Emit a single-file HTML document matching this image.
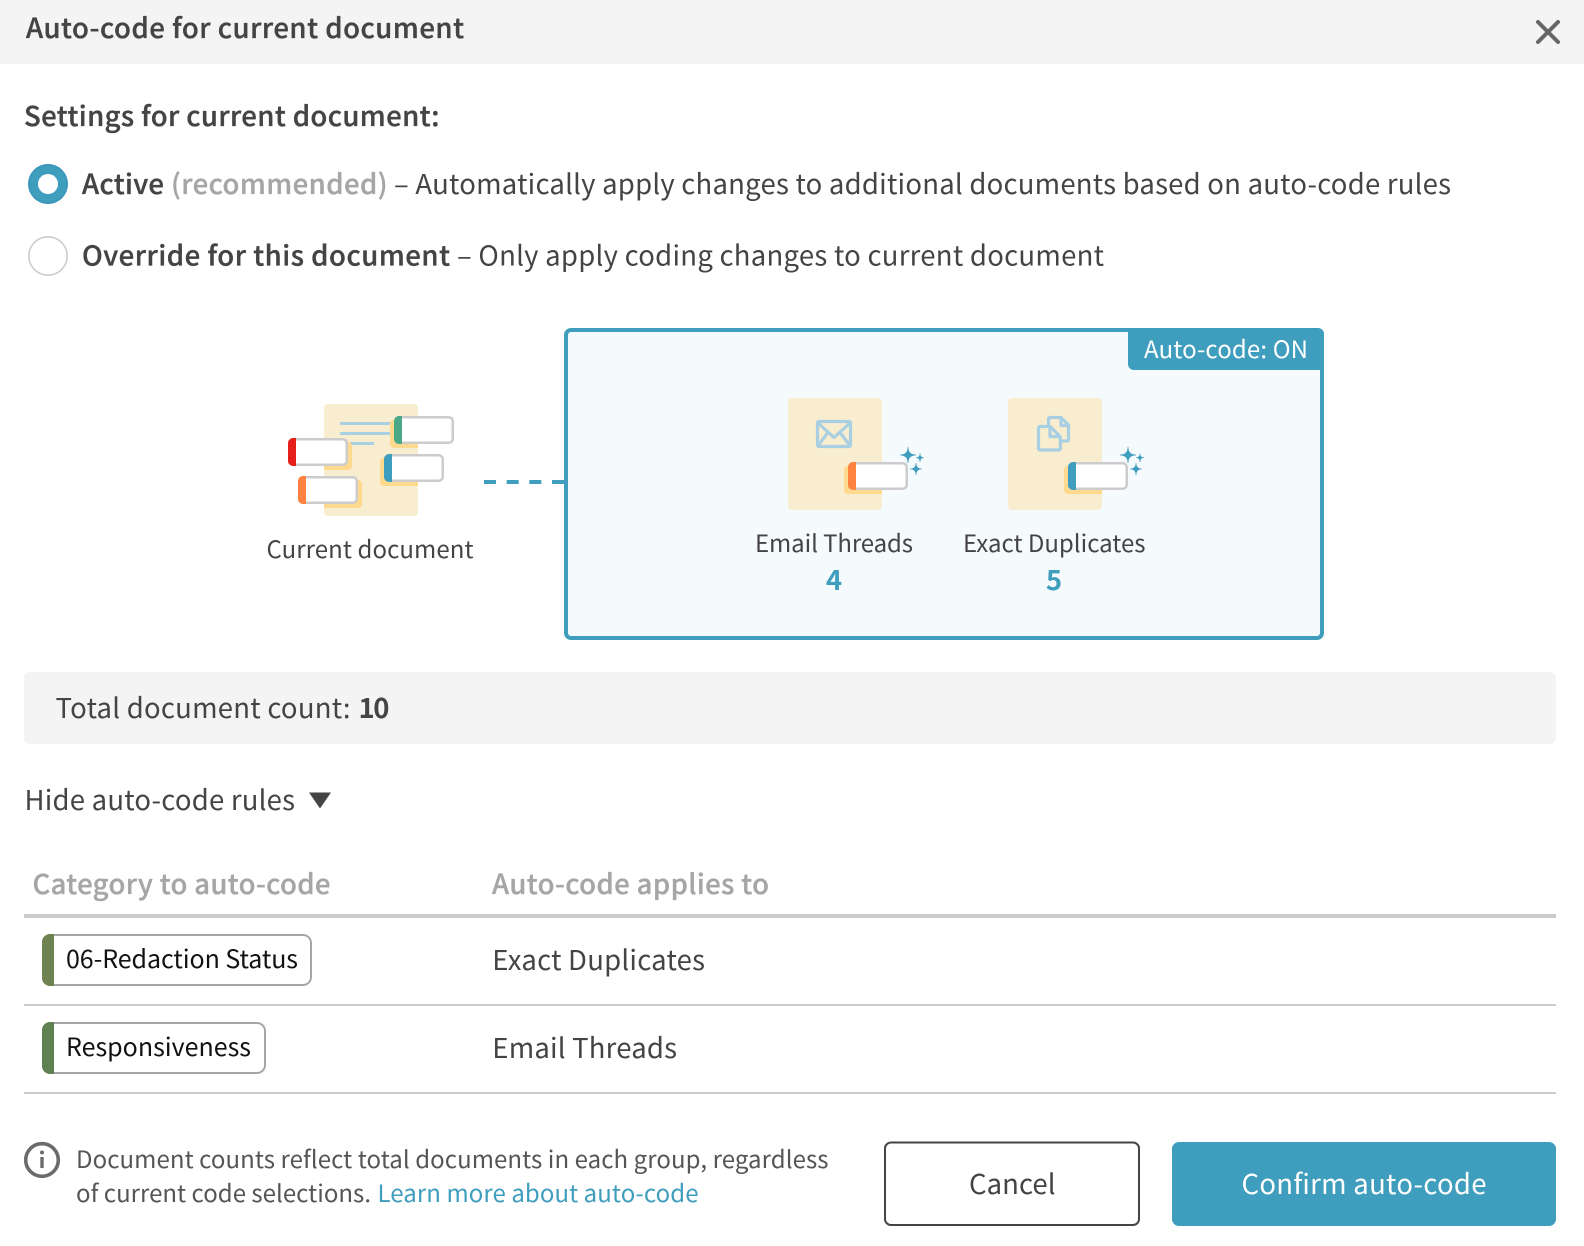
<!DOCTYPE html>
<html lang="en">
<head>
<meta charset="utf-8">
<title>Auto-code for current document</title>
<style>
html,body{margin:0;padding:0;background:#fff;width:1584px;height:1246px;overflow:hidden}
svg{display:block}
text{font-family:"Noto Sans CJK JP","Liberation Sans",sans-serif;fill:#444;font-size:27.5px;font-weight:400}
.s{font-weight:500;stroke:#444;stroke-width:.35px}
.b{font-weight:700}
.sm{font-size:24px}
.g{fill:#a6a6a6;stroke:#a6a6a6}
.bl{fill:#3f9dbd}
</style>
</head>
<body>
<svg width="1584" height="1246" viewBox="0 0 1584 1246" xmlns="http://www.w3.org/2000/svg">
<defs>
<clipPath id="c1"><rect x="324" y="404" width="94" height="112" rx="4"/></clipPath>
<clipPath id="c2"><rect x="788" y="398" width="94" height="112" rx="4"/></clipPath>
<clipPath id="c3"><rect x="1008" y="398" width="94" height="112" rx="4"/></clipPath>
<g id="spark" fill="#3f9dbd">
<path d="M0-8Q0 0 8 0Q0 0 0 8Q0 0-8 0Q0 0 0-8Z" stroke="#3f9dbd" stroke-width=".7"/>
<path d="M12-1.5Q12 2.7 16 2.7Q12 2.7 12 7Q12 2.7 8 2.7Q12 2.7 12-1.5Z" stroke="#3f9dbd" stroke-width=".5"/>
<path d="M8 8Q8 14 14 14Q8 14 8 20Q8 14 2 14Q8 14 8 8Z" stroke="#3f9dbd" stroke-width=".6"/>
</g>
<g id="tagbody"><rect x="1.25" y="1.25" width="57.5" height="25.5" rx="4" fill="#fff" stroke="#ccc" stroke-width="2.5"/></g>
<path id="tagcap" d="M8 0H5a5 5 0 0 0-5 5v18a5 5 0 0 0 5 5h3z"/>
</defs>

<!-- header -->
<rect x="0" y="0" width="1584" height="64" fill="#f4f4f4"/>
<text x="26" y="38" class="s" textLength="438" lengthAdjust="spacing">Auto-code for current document</text>
<path d="M1538 22L1558 42M1558 22L1538 42" stroke="#666" stroke-width="4" stroke-linecap="round" fill="none"/>

<!-- settings -->
<text x="24" y="126" class="s" textLength="415.5" lengthAdjust="spacing">Settings for current document:</text>

<circle cx="48" cy="184" r="20" fill="#2f92b8"/>
<circle cx="48" cy="184" r="18.8" fill="#3f9dbd"/>
<circle cx="48" cy="184" r="10" fill="#fff"/>
<text x="82" y="194" class="s" textLength="82" lengthAdjust="spacing">Active</text>
<text x="171" y="194" class="s g" textLength="216.5" lengthAdjust="spacing">(recommended)</text>
<text x="394" y="194" textLength="1057" lengthAdjust="spacing">– Automatically apply changes to additional documents based on auto-code rules</text>

<circle cx="48" cy="256" r="19.2" fill="#fff" stroke="#ccc" stroke-width="1.6"/>
<text x="82" y="265.5" class="s" textLength="368" lengthAdjust="spacing">Override for this document</text>
<text x="457" y="265.5" textLength="647" lengthAdjust="spacing">– Only apply coding changes to current document</text>

<!-- current document illustration -->
<rect x="324" y="404" width="94" height="112" rx="4" fill="#f9edcf"/>
<g fill="#a9cfe2">
<rect x="340" y="422" width="54" height="3"/>
<rect x="340" y="432" width="54" height="3"/>
<rect x="349" y="442" width="25" height="3"/>
</g>
<g clip-path="url(#c1)" fill="#fed98e">
<rect x="390" y="420" width="60" height="28" rx="4"/>
<rect x="292" y="442" width="60" height="28" rx="4"/>
<rect x="380" y="458" width="60" height="28" rx="4"/>
<rect x="302" y="480" width="60" height="28" rx="4"/>
</g>
<g transform="translate(394 416)"><use href="#tagbody"/><use href="#tagcap" fill="#4aa887"/></g>
<g transform="translate(288 438)"><use href="#tagbody"/><use href="#tagcap" fill="#e41f1c"/></g>
<g transform="translate(384 454)"><use href="#tagbody"/><use href="#tagcap" fill="#3f9dbd"/></g>
<g transform="translate(298 476)"><use href="#tagbody"/><use href="#tagcap" fill="#fe8340"/></g>
<text x="266.5" y="558" class="sm" textLength="207" lengthAdjust="spacing">Current document</text>

<!-- dashes -->
<g fill="#3f9dbd">
<rect x="484" y="480" width="12" height="4"/>
<rect x="506.7" y="480" width="12" height="4"/>
<rect x="529.3" y="480" width="12" height="4"/>
<rect x="552" y="480" width="12" height="4"/>
</g>

<!-- auto-code box -->
<rect x="566" y="330" width="756" height="308" rx="5" fill="#f5fafd" stroke="#3f9dbd" stroke-width="4"/>
<path d="M1128 328H1318a6 6 0 0 1 6 6V370H1134a6 6 0 0 1-6-6Z" fill="#3f9dbd"/>
<text x="1144" y="358" class="sm" style="fill:#fff" textLength="164" lengthAdjust="spacing">Auto-code: ON</text>

<!-- email threads -->
<rect x="788" y="398" width="94" height="112" rx="4" fill="#f9edcf"/>
<g fill="none" stroke="#a9cfe2" stroke-width="3.2" stroke-linejoin="round">
<rect x="817.5" y="421.5" width="33" height="25" rx="1.5"/>
<path d="M818 423L834 437.5L850 423M818.5 445L828 432.5M849.5 445L840 432.5"/>
</g>
<rect x="844" y="466" width="60" height="28" rx="4" fill="#fed98e" clip-path="url(#c2)"/>
<g transform="translate(848 462)"><use href="#tagbody"/><use href="#tagcap" fill="#fe8340"/></g>
<use href="#spark" x="908" y="455"/>
<text x="755" y="552" class="sm" textLength="158" lengthAdjust="spacing">Email Threads</text>
<text x="834" y="590" class="b bl" text-anchor="middle">4</text>

<!-- exact duplicates -->
<rect x="1008" y="398" width="94" height="112" rx="4" fill="#f9edcf"/>
<g fill="none" stroke="#a9cfe2" stroke-width="3.2" stroke-linejoin="round">
<path d="M1048.5 425V419a1.5 1.5 0 0 1 1.5-1.5H1061L1068.5 425V439.5a1.5 1.5 0 0 1-1.5 1.5H1061.5"/>
<path d="M1061 418V425.5H1068"/>
<path d="M1040 426.5H1050L1060.3 436.5V448.5a1.5 1.5 0 0 1-1.5 1.5H1040a1.5 1.5 0 0 1-1.5-1.5V428a1.5 1.5 0 0 1 1.5-1.5Z"/>
<path d="M1050 427V436.5H1059.5"/>
</g>
<rect x="1064" y="466" width="60" height="28" rx="4" fill="#fed98e" clip-path="url(#c3)"/>
<g transform="translate(1068 462)"><use href="#tagbody"/><use href="#tagcap" fill="#3f9dbd"/></g>
<use href="#spark" x="1128" y="455"/>
<text x="963" y="552" class="sm" textLength="182.5" lengthAdjust="spacing">Exact Duplicates</text>
<text x="1054" y="590" class="b bl" text-anchor="middle">5</text>

<!-- total -->
<rect x="24" y="672" width="1532" height="72" rx="6" fill="#f4f4f4"/>
<text x="55.5" y="718" textLength="295" lengthAdjust="spacing">Total document count:</text>
<text x="358.5" y="718" class="b" textLength="31" lengthAdjust="spacing">10</text>

<!-- hide rules -->
<text x="24.5" y="810" textLength="270.5" lengthAdjust="spacing">Hide auto-code rules</text>
<path d="M309 792.5H331L320 808.5Z" fill="#444"/>

<!-- table -->
<text x="32.5" y="894" class="s g" textLength="298" lengthAdjust="spacing">Category to auto-code</text>
<text x="492" y="894" class="s g" textLength="277" lengthAdjust="spacing">Auto-code applies to</text>
<rect x="24" y="914" width="1532" height="4" fill="#ccc"/>

<rect x="43" y="935" width="268" height="50" rx="8" fill="#fff" stroke="#a6a6a6" stroke-width="2"/>
<path d="M54 934H50a8 8 0 0 0-8 8V978a8 8 0 0 0 8 8H54Z" fill="#6f8351"/>
<text x="66" y="968" style="fill:#111;font-size:25px" textLength="232" lengthAdjust="spacing">06-Redaction Status</text>
<text x="492.3" y="970" textLength="212.7" lengthAdjust="spacing">Exact Duplicates</text>
<rect x="24" y="1004" width="1532" height="2" fill="#ccc"/>

<rect x="43" y="1023" width="222" height="50" rx="8" fill="#fff" stroke="#a6a6a6" stroke-width="2"/>
<path d="M54 1022H50a8 8 0 0 0-8 8V1066a8 8 0 0 0 8 8H54Z" fill="#5f8050"/>
<text x="66" y="1056" style="fill:#111;font-size:25px" textLength="185" lengthAdjust="spacing">Responsiveness</text>
<text x="492.3" y="1058" textLength="184.7" lengthAdjust="spacing">Email Threads</text>
<rect x="24" y="1092" width="1532" height="2" fill="#ccc"/>

<!-- footer note -->
<circle cx="42" cy="1160" r="16.3" fill="none" stroke="#6b6b6b" stroke-width="3.6"/>
<circle cx="42" cy="1152.5" r="2" fill="#6b6b6b"/>
<rect x="40.3" y="1157" width="3.4" height="11" fill="#6b6b6b"/>
<text x="76" y="1168" class="sm" style="fill:#555" textLength="752.5" lengthAdjust="spacing">Document counts reflect total documents in each group, regardless</text>
<text x="76" y="1202" class="sm" style="fill:#555" textLength="295" lengthAdjust="spacing">of current code selections.</text>
<text x="377.5" y="1202" class="sm bl" textLength="321" lengthAdjust="spacing">Learn more about auto-code</text>

<!-- buttons -->
<rect x="885" y="1142.5" width="254" height="82.5" rx="6" fill="#fff" stroke="#444" stroke-width="2"/>
<text x="969" y="1194" textLength="86.5" lengthAdjust="spacing">Cancel</text>
<rect x="1172" y="1142" width="384" height="84" rx="7" fill="#3f9dbd"/>
<text x="1241.5" y="1194" style="fill:#fff" textLength="245" lengthAdjust="spacing">Confirm auto-code</text>
</svg>
</body>
</html>
